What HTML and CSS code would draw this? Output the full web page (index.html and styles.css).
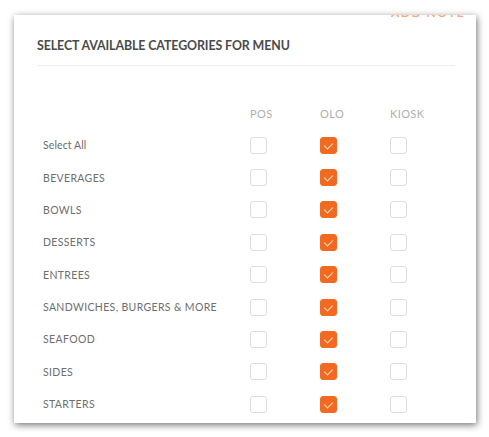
FILE: index.html
```html
<!DOCTYPE html>
<html>
<head>
<meta charset="utf-8">
<link rel="stylesheet" href="styles.css">
</head>
<body>
<div class="card">
  <span class="clipped">ADD NOTE</span>
  <h2 class="title">SELECT AVAILABLE CATEGORIES FOR MENU</h2>
  <div class="divider"></div>
  <div class="grid">
    <div class="row head"><span></span><span>POS</span><span>OLO</span><span>KIOSK</span></div>
    <div class="row"><span class="label normal">Select All</span><i class="cb"></i><i class="cb on"></i><i class="cb"></i></div>
    <div class="row"><span class="label">BEVERAGES</span><i class="cb"></i><i class="cb on"></i><i class="cb"></i></div>
    <div class="row"><span class="label">BOWLS</span><i class="cb"></i><i class="cb on"></i><i class="cb"></i></div>
    <div class="row"><span class="label">DESSERTS</span><i class="cb"></i><i class="cb on"></i><i class="cb"></i></div>
    <div class="row"><span class="label">ENTREES</span><i class="cb"></i><i class="cb on"></i><i class="cb"></i></div>
    <div class="row"><span class="label">SANDWICHES, BURGERS &amp; MORE</span><i class="cb"></i><i class="cb on"></i><i class="cb"></i></div>
    <div class="row"><span class="label">SEAFOOD</span><i class="cb"></i><i class="cb on"></i><i class="cb"></i></div>
    <div class="row"><span class="label">SIDES</span><i class="cb"></i><i class="cb on"></i><i class="cb"></i></div>
    <div class="row"><span class="label">STARTERS</span><i class="cb"></i><i class="cb on"></i><i class="cb"></i></div>
  </div>
</div>
</body>
</html>
```
FILE: styles.css
```css
html, body { margin: 0; padding: 0; background: #fff; }
body { padding: 15px 13px 14px 14px; font-family: Lato, "Open Sans", sans-serif; }
.card {
  position: relative;
  width: 462px;
  height: 408px;
  box-sizing: border-box;
  background: #fff;
  box-shadow: 1px 2px 7px rgba(0,0,0,0.55);
  padding: 23px 21px 0 23px;
  overflow: hidden;
}
.clipped {
  position: absolute;
  top: -9px;
  left: 377px;
  line-height: 13px;
  color: #f7a875;
  font-size: 12px;
  letter-spacing: 1.5px;
  font-weight: 700;
}
.title {
  margin: 0;
  font-size: 12.4px;
  line-height: 16px;
  font-weight: 700;
  color: #4a4a4a;
  letter-spacing: -0.1px;
}
.divider { height: 1px; background: #eee; margin-top: 11px; }
.grid { margin-top: 31px; padding-left: 6px; }
.row {
  display: grid;
  grid-template-columns: 207px 70px 70px 70px;
  align-items: center;
  height: 32.375px;
}
.head { height: 32px; font-size: 11px; color: #b0b0b0; letter-spacing: 0.4px; }
.label { font-size: 10.5px; color: #6e6e6e; letter-spacing: 0.35px; }
.label.normal { letter-spacing: 0.1px; }
.cb {
  display: block;
  width: 17px;
  height: 17px;
  box-sizing: border-box;
  border: 1px solid #ddd;
  border-radius: 3px;
  position: relative;
}
.cb.on { background: #f26a21; border-color: #f26a21; }
.cb.on::after {
  content: "";
  position: absolute;
  left: 5px;
  top: 3px;
  width: 4px;
  height: 7px;
  border: solid #fde3d2;
  border-width: 0 1.3px 1.3px 0;
  transform: rotate(45deg);
}
```
